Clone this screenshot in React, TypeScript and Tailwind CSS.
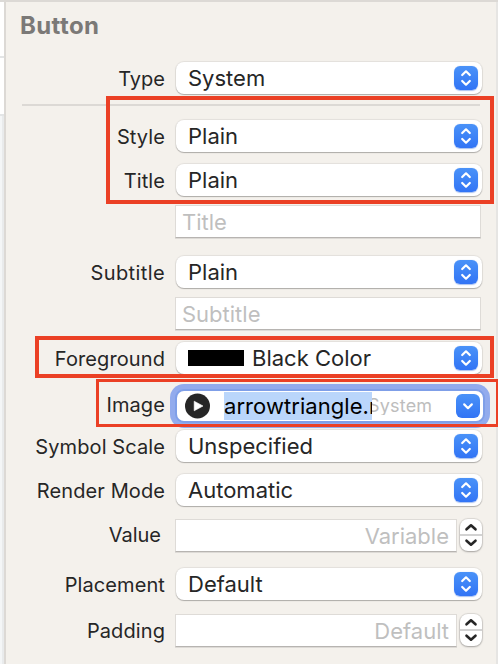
import type { ReactNode } from "react";

function Chevrons() {
  return (
    <span className="flex size-6 shrink-0 items-center justify-center rounded-[6px] bg-linear-to-b from-[#4a92f8] to-[#3274f5] shadow-[0_0.5px_1px_rgba(40,100,220,0.4)]">
      <svg width="24" height="24" viewBox="0 0 24 24" fill="none" stroke="white" strokeWidth="2.2" strokeLinecap="round" strokeLinejoin="round">
        <path d="M8.2 9 12 5.3 15.8 9M8.2 15 12 18.7l3.8-3.7" />
      </svg>
    </span>
  );
}

function Row({ label, track = "pr-px tracking-[0.1px]", className = "", children }: { label?: string; track?: string; className?: string; children: ReactNode }) {
  return (
    <div className={`flex h-8 shrink-0 ${className}`}>
      <div className={`mr-[10px] flex w-[160px] shrink-0 items-center justify-end pt-px text-[20px] leading-none whitespace-nowrap ${track}`}>{label}</div>
      {children}
    </div>
  );
}

function Popup({ children }: { children: ReactNode }) {
  return (
    <div className="flex h-8 w-[306px] shrink-0 items-center justify-between rounded-[8px] bg-white pr-1 pl-3 shadow-[0_0_1px_1px_rgba(0,0,0,0.07),0_1px_1px_rgba(0,0,0,0.24)]">
      <span className="flex items-center text-[22px] leading-none whitespace-nowrap">{children}</span>
      <Chevrons />
    </div>
  );
}

function Field({ text, narrow = false }: { text: string; narrow?: boolean }) {
  return (
    <div className={`-ml-px flex h-[33px] shrink-0 items-center border border-[#dedbd7] border-b-[#b7b4b1] bg-white px-[6px] text-[22px] leading-none text-[#bfbfbf] shadow-[0_1px_0_#dddad6] ${narrow ? "w-[282px] justify-end" : "w-[306px]"}`}>
      <span className={narrow ? "pr-px" : ""}>{text}</span>
    </div>
  );
}

function Stepper() {
  return (
    <div className="ml-[3px] h-8 w-[22px] shrink-0 rounded-[8px] bg-white shadow-[0_0_1px_1px_rgba(0,0,0,0.1),0_1px_2px_rgba(0,0,0,0.25)]">
      <svg width="22" height="32" viewBox="0 0 22 32" fill="none" stroke="#262626" strokeWidth="2.6" strokeLinecap="round" strokeLinejoin="round">
        <path d="M0 16h22" stroke="#d2d2d2" strokeWidth="2" strokeLinecap="butt" />
        <path d="m6.5 10.3 4.5-4 4.5 4M6.5 21.7l4.5 4 4.5-4" />
      </svg>
    </div>
  );
}

export default function App() {
  return (
    <div className="relative flex h-[664px] w-[498px] overflow-hidden bg-[#f4f1ec] font-[Inter,sans-serif] text-[#262626]">
      <div className="flex w-1 shrink-0 flex-col bg-[#f4f6f7]">
        <div className="h-[2px] bg-[#dcdad7]" />
        <div className="h-[54px] bg-white" />
        <div className="h-[2px] bg-[#e3e5e6]" />
        <div className="h-[56px] bg-white" />
        <div className="h-[2px] bg-[#e3e5e6]" />
        <div className="grow border-r-2 border-[#e9ebec]" />
      </div>
      <div className="flex w-[492px] shrink-0 flex-col border-t-2 border-l-2 border-[#dcd9d5]">
        <h1 className="mt-[12px] ml-[14px] h-[24px] text-[24px] leading-none font-bold tracking-[0.4px] text-[#7b7977]">Button</h1>
        <Row label="Type" track="pr-px" className="mt-[24px]"><Popup>System</Popup></Row>
        <div className="mt-[10px] ml-4 h-[2px] w-[458px] shrink-0 bg-[#dcd9d5]" />
        <Row label="Style" className="mt-[14px]"><Popup>Plain</Popup></Row>
        <Row label="Title" className="mt-[12px]"><Popup>Plain</Popup></Row>
        <Row className="mt-[9px]"><Field text="Title" /></Row>
        <Row label="Subtitle" track="pr-px tracking-[0.4px]" className="mt-[19px]"><Popup>Plain</Popup></Row>
        <Row className="mt-[9px]"><Field text="Subtitle" /></Row>
        <Row label="Foreground" className="mt-[13px]">
          <Popup><span className="mr-2 h-4 w-14 bg-black" />Black Color</Popup>
        </Row>
        <Row label="Image" track="mb-[3px] pr-px tracking-[0.1px]" className="mt-[16px]">
          <div className="mt-px ml-px flex h-[30px] w-[306px] shrink-0 items-center rounded-[7px] bg-white pr-[3px] pl-2 shadow-[0_0_0_2px_#7f9fe8,0_0_0_7px_#92abed]">
            <svg width="26" height="26" viewBox="0 0 26 26" className="shrink-0">
              <circle cx="12.5" cy="13" r="12.5" fill="#262626" />
              <path d="M9.2 8.2v9.6l8.8-4.8z" fill="white" stroke="white" strokeWidth="0.6" strokeLinejoin="round" />
            </svg>
            <span className="ml-[13px] flex h-7 w-[148px] shrink-0 items-center overflow-hidden bg-[#bad6fb] text-[22px] leading-none tracking-[0.06px] whitespace-nowrap text-black">arrowtriangle.right</span>
            <span className="flex w-[60px] grow items-center overflow-hidden text-[18px] leading-none text-[#bdbdbd]"><span className="-ml-[4px] tracking-[0.2px]">System</span></span>
            <span className="size-6 shrink-0 rounded-[6px] bg-linear-to-b from-[#4a92f8] to-[#3274f5]">
              <svg width="24" height="24" viewBox="0 0 24 24" fill="none" stroke="white" strokeWidth="2.2" strokeLinecap="round" strokeLinejoin="round"><path d="m8.2 10.4 3.8 3.8 3.8-3.8" /></svg>
            </span>
          </div>
        </Row>
        <Row label="Symbol Scale" className="mt-[8px]"><Popup>Unspecified</Popup></Row>
        <Row label="Render Mode" className="mt-[12px]"><Popup>Automatic</Popup></Row>
        <Row label="Value" track="mb-[2px] pr-[5px]" className="mt-[13px]"><Field narrow text="Variable" /><Stepper /></Row>
        <Row label="Placement" className="mt-[17px]"><Popup>Default</Popup></Row>
        <Row label="Padding" className="mt-[14px]"><Field narrow text="Default" /><Stepper /></Row>
      </div>
      <div className="w-[2px] shrink-0 border-t-2 border-[#dcd9d5] bg-[#e6e5e3]" />
      <div className="absolute top-[96px] left-[106px] h-[108px] w-[388px] border-4 border-[#eb4025]" />
      <div className="absolute top-[336px] left-[35px] h-[42px] w-[459px] border-4 border-[#eb4025]" />
      <div className="absolute top-[379px] left-[96px] h-[48px] w-[403px] border-3 border-[#eb4025]" />
    </div>
  );
}
